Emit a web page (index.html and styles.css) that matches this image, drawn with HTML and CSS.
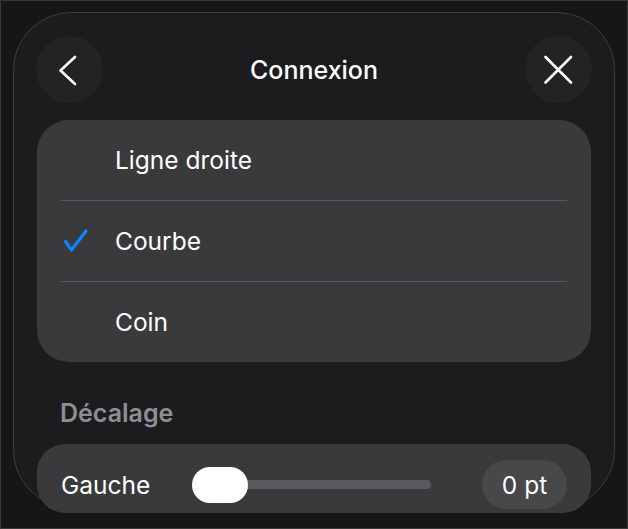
FILE: index.html
```html
<!DOCTYPE html>
<html>

<head>
  <meta charset="UTF-8">
  <meta name="viewport" content="width=device-width, initial-scale=1.0">
  <title>Connexion</title>

  <link rel="stylesheet" href="styles.css">
</head>

<body>
  <div class="panel">
    <div class="header">
      <button class="round-btn" aria-label="Retour">
        <svg width="67" height="67" viewBox="0 0 67 67">
          <polyline points="39,21 24.5,34.5 39,48" fill="none" stroke="#fff" stroke-width="2.6" stroke-linecap="round" stroke-linejoin="round" />
        </svg>
      </button>
      <h2 class="title">Connexion</h2>
      <button class="round-btn" aria-label="Fermer">
        <svg width="67" height="67" viewBox="0 0 67 67">
          <path d="M20.5 21 L46 46.5 M46 21 L20.5 46.5" fill="none" stroke="#fff" stroke-width="2.6" stroke-linecap="round" />
        </svg>
      </button>
    </div>

    <div class="card list">
      <div class="item">
        <span class="check"></span>
        <span>Ligne droite</span>
      </div>
      <div class="item">
        <span class="check">
          <svg width="28" height="26" viewBox="0 0 28 26">
            <path d="M4.5 13.5 L10.5 22 L25 3" fill="none" stroke="#0a84ff" stroke-width="3.2" stroke-linecap="round" stroke-linejoin="round" />
          </svg>
        </span>
        <span>Courbe</span>
      </div>
      <div class="item">
        <span class="check"></span>
        <span>Coin</span>
      </div>
    </div>

    <div class="section">Décalage</div>

    <div class="card offset">
      <div class="offset-row">
        <span class="offset-label">Gauche</span>
        <div class="slider">
          <div class="track"></div>
          <div class="thumb"></div>
        </div>
        <span class="value">0 pt</span>
      </div>
    </div>
  </div>
</body>

</html>
```

FILE: styles.css
```css
* {
  box-sizing: border-box;
}

html,
body {
  height: 100%;
}

body {
  margin: 0;
  overflow: hidden;
  font-family: Inter, "Noto Sans", sans-serif;
  color: #fff;
  background: #161618;
  border: 1px solid #3a3a3c;
}

.panel {
  margin: 11px 12px 0 12px;
  height: 496px;
  padding: 23px 22px;
  background: #1c1c1e;
  border: 1px solid #3d3d40;
  border-radius: 58px;
}

.header {
  display: flex;
  align-items: center;
  justify-content: space-between;
  height: 67px;
}

.round-btn {
  width: 67px;
  height: 67px;
  padding: 0;
  border: none;
  border-radius: 50%;
  background: #232325;
  display: flex;
}

.title {
  margin: 0;
  font-size: 25px;
  font-weight: 500;
}

.card {
  margin: 0 1px;
  background: #3a3a3c;
}

.list {
  margin-top: 17px;
  border-radius: 32px;
}

.item {
  display: flex;
  align-items: center;
  height: 80px;
  padding-left: 24px;
  font-size: 24.5px;
}

.item + .item {
  height: 81px;
  position: relative;
}

.item + .item:before {
  content: "";
  position: absolute;
  top: 0;
  left: 24px;
  right: 24px;
  height: 1px;
  background: #58585c;
}

.check {
  width: 54px;
  display: flex;
  align-items: center;
}

.section {
  margin-top: 38px;
  padding-left: 24px;
  line-height: 26px;
  font-size: 25px;
  font-weight: 600;
  color: #8e8e93;
}

.offset {
  margin-top: 18px;
  height: 69px;
  padding: 16px 24px 0;
  border-radius: 28px;
}

.offset-row {
  display: flex;
  align-items: center;
  height: 49px;
  font-size: 24.5px;
}

.offset-label {
  width: 131px;
  flex: none;
}

.slider {
  position: relative;
  width: 239px;
  height: 36px;
  display: flex;
  align-items: center;
}

.track {
  width: 100%;
  height: 9px;
  border-radius: 5px;
  background: #5a5a5e;
}

.thumb {
  position: absolute;
  left: 0;
  top: 0;
  width: 56px;
  height: 36px;
  border-radius: 18px;
  background: #fff;
}

.value {
  margin-left: auto;
  width: 85px;
  height: 49px;
  border-radius: 25px;
  background: #48484a;
  display: flex;
  align-items: center;
  justify-content: center;
}
```
